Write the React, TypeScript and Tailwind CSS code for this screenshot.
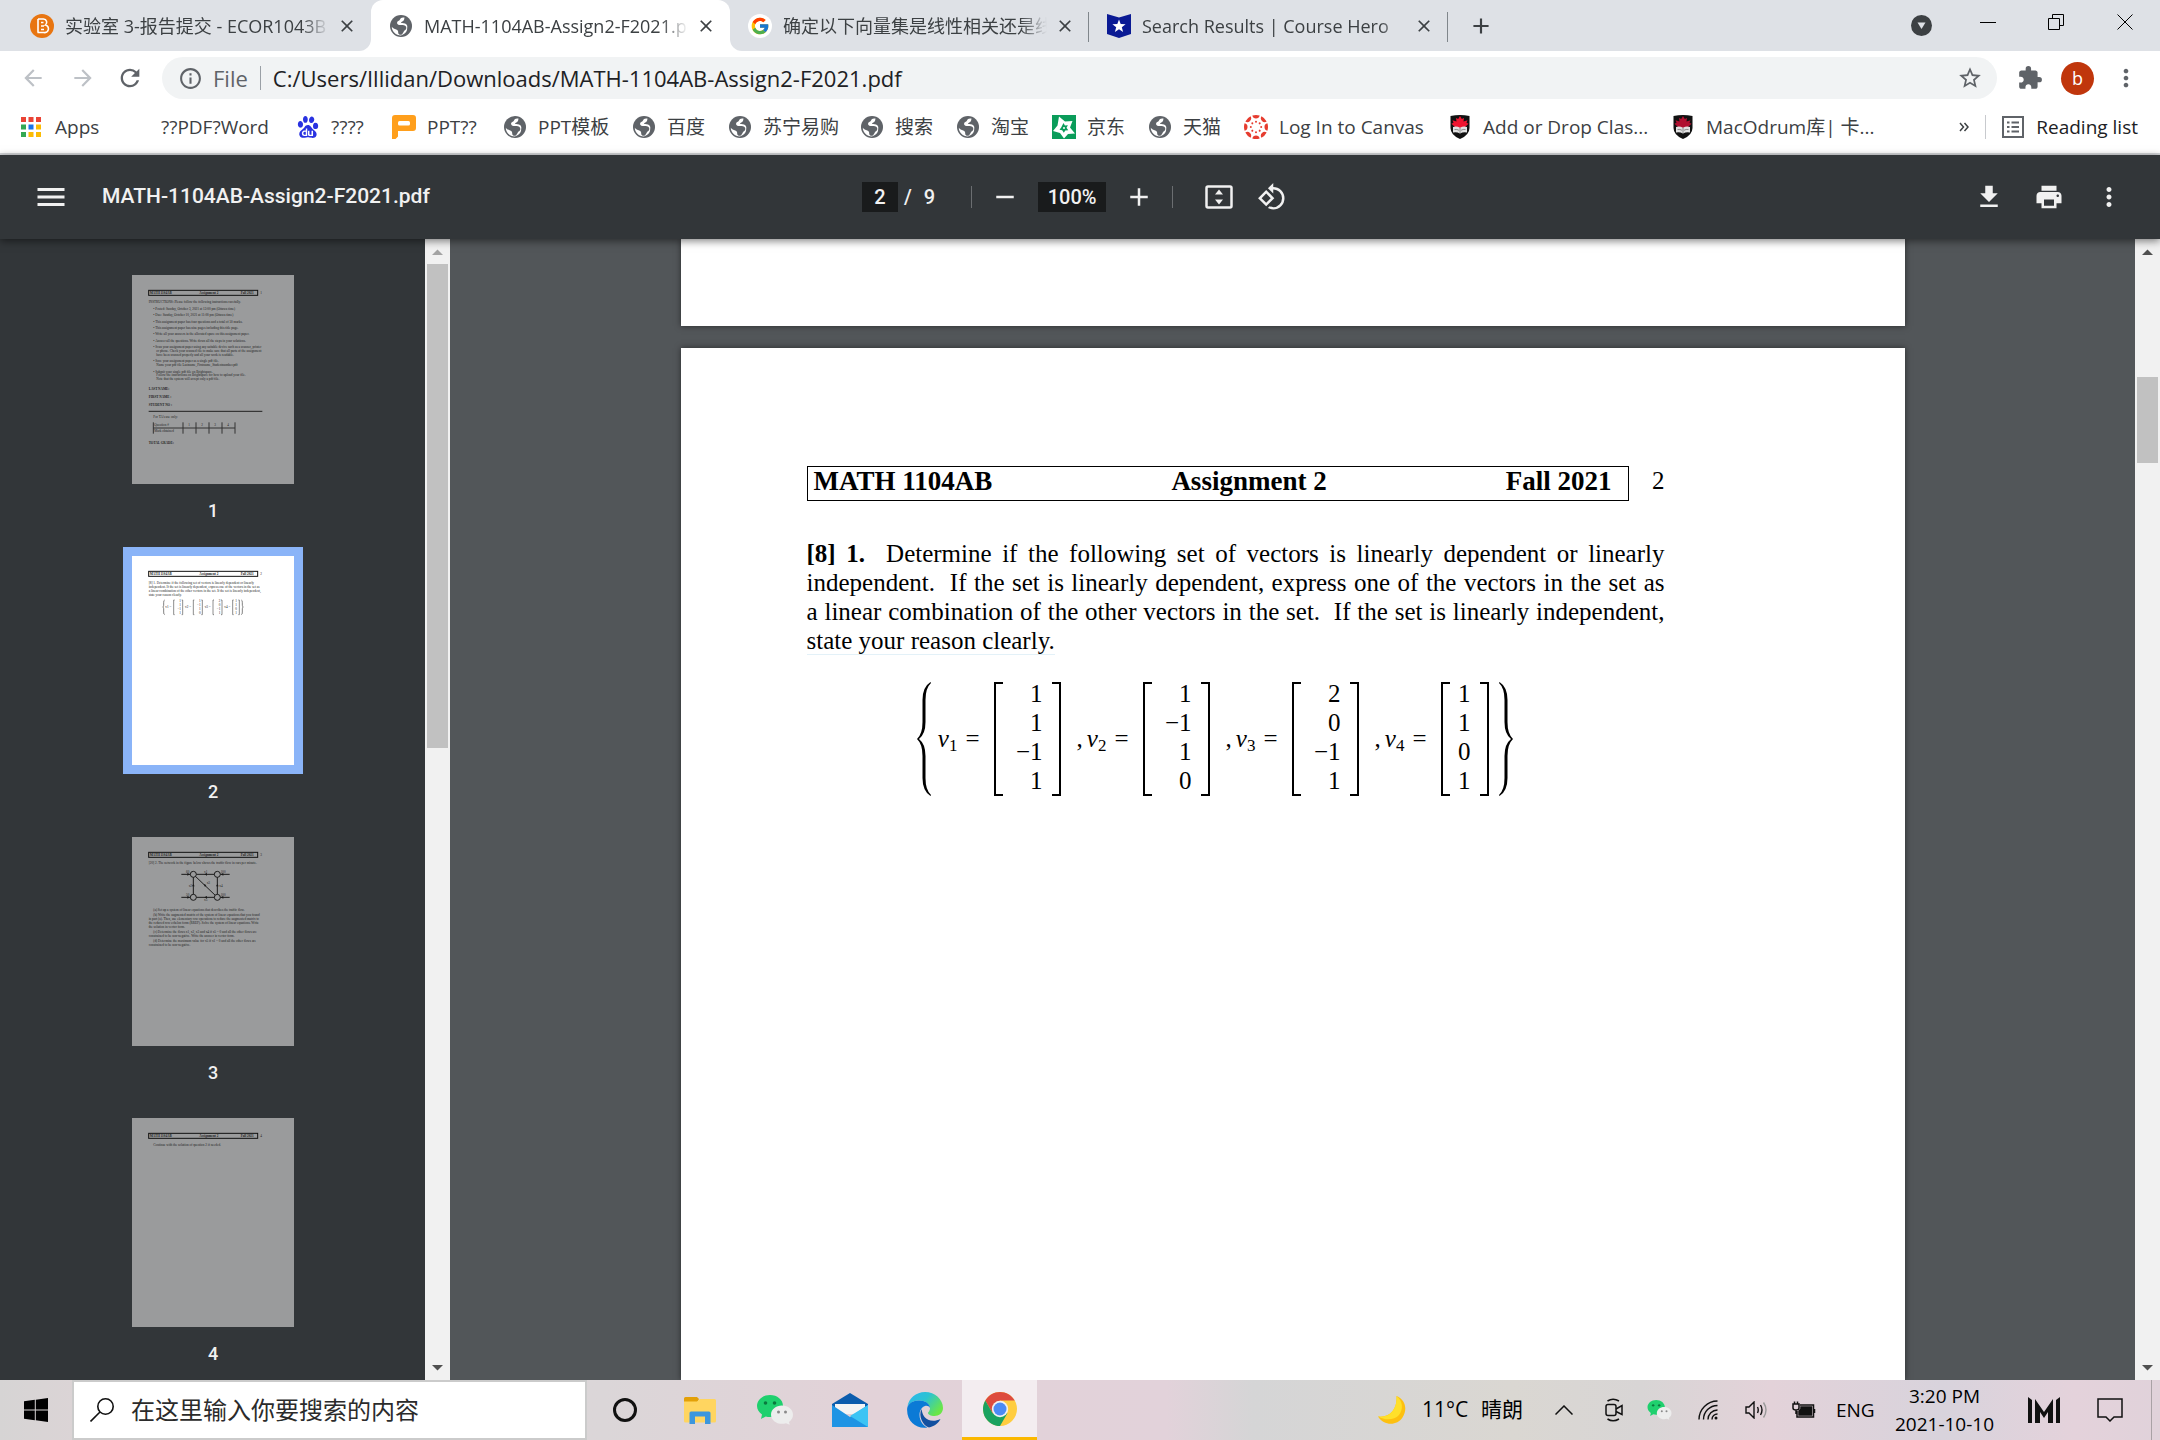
import { useState } from "react";
import type { ReactNode } from "react";
import {
  MdAdd,
  MdArrowBack,
  MdArrowForward,
  MdClose,
  MdExtension,
  MdGetApp,
  MdInfoOutline,
  MdMenu,
  MdMoreVert,
  MdPrint,
  MdRefresh,
  MdRemove,
  MdRotate90DegreesCcw,
  MdStarBorder,
} from "react-icons/md";
import { FcGoogle } from "react-icons/fc";
import { SiBaidu } from "react-icons/si";

/* ---------- site icons ---------- */

const Globe = () => (
  <svg viewBox="0 0 24 24" className="size-6 shrink-0">
    <circle cx="12" cy="12" r="11" fill="#5f6368" />
    <path
      d="M15.500 3.600C13 3 11.500 4 11 5.500c-.3 1.200-2.200 1-2.800 2.500-.6 1.700.6 2.800 2.300 3 2 .2 4.500-.4 6 1 1.300 1.300 1 3.300-.6 4.300-1.400.8-1.400 2.700-3.400 4.500-2.200.2-3-.5-3.300-2 .2-1.600-.4-2.800-2-3.400-1.700-.6-3.300-1-4.400-2.600 0 4.700 4 8.700 9.200 8.700 3.800-1.300 5.500-3.500 6-5.500.2-2.400.9-4.300-.7-5.800-1.500-1.300-3.800-1-5.300-1.200.2-1.700 2.500-1.500 3-3 .3-1 .3-1.600.5-2.400z"
      fill="#fff"
    />
  </svg>
);

const Brightspace = () => (
  <svg viewBox="0 0 24 24" className="size-6 shrink-0">
    <circle cx="12" cy="12" r="12" fill="#e87511" />
    <path
      d="M8 5h5.500a3.400 3.400 0 0 1 2 6 3.800 3.800 0 0 1-1.800 7.500H7.500M8 5v13.500M11 8.500h2.500M11 12h3M11 15.500h3"
      fill="none"
      stroke="#fff"
      strokeWidth="1.600"
    />
  </svg>
);

const CourseHero = () => (
  <svg viewBox="0 0 24 24" className="size-6 shrink-0">
    <path d="M0 0l12 3.500L24 0v20l-12 4-12-4z" fill="#0a1a94" />
    <path d="M12 5.500l1.700 4.600 4.900.2-3.800 3 1.300 4.700-4.100-2.700L7.900 18l1.300-4.700-3.800-3 4.900-.2z" fill="#fff" />
  </svg>
);

const AppsGrid = () => (
  <svg viewBox="0 0 20 20" className="mr-[3px] size-5 shrink-0">
    {["#ea4335", "#ea4335", "#ea4335", "#34a853", "#1a73e8", "#fbbc04", "#34a853", "#fbbc04", "#fbbc04"].map((c, i) => (
      <rect key={i} x={(i % 3) * 7.5} y={Math.floor(i / 3) * 7.5} width="5" height="5" fill={c} />
    ))}
  </svg>
);

const PptIcon = () => (
  <svg viewBox="0 0 24 24" className="size-6 shrink-0">
    <path d="M3 0h18a3 3 0 0 1 3 3v10a3 3 0 0 1-3 3H6v5.500L3.500 24H0V3a3 3 0 0 1 3-3z" fill="#ff9f1c" />
    <rect x="6" y="6" width="12" height="4.500" rx="1.500" fill="#fff" />
  </svg>
);

const JdIcon = () => (
  <svg viewBox="0 0 24 24" className="size-6 shrink-0">
    <rect width="24" height="24" fill="#0a9c5a" />
    <path d="M7 1.500l6 5 7.500-.5-2.500 6.500 5 6-7 .5-4 4.500-4-5.500-7-2 4.500-5.500z" fill="#fff" />
    <path d="M11.500 8l1.400 2.500 3-.3-1.400 2.600 1.800 2.500-3 .2-1.500 2.200-1.600-2.400-2.700-.6 1.700-2.200z" fill="#0a9c5a" />
    <circle cx="12" cy="13" r="1" fill="#fff" />
  </svg>
);

const CanvasIcon = () => (
  <svg viewBox="0 0 24 24" className="size-6 shrink-0">
    {[0, 45, 90, 135, 180, 225, 270, 315].map((a) => (
      <g key={a} transform={`rotate(${a} 12 12)`} fill="#e63c2f">
        <path d="M8.300 .6a12 12 0 0 1 7.400 0 3.800 3.800 0 0 1-7.400 0z" />
        <circle cx="12" cy="6.800" r="1" />
      </g>
    ))}
  </svg>
);

const Shield = ({ leaf }: { leaf: string }) => (
  <svg viewBox="0 0 24 24" className="size-6 shrink-0">
    <path d="M2.500 1Q12-1 21.500 1v12q0 7-9.500 11-9.500-4-9.500-11z" fill="#111" />
    <path d="M12 1l1.800 3 2.200-1-.5 3.500 4-1.200-1 2.500 2 1-4.500 4.200H8l-4.500-4.200 2-1-1-2.500 4 1.200L8 3l2.200 1z" fill={leaf} />
    <path d="M5 12q3.500-1.500 7 .8 3.500-2.300 7-.8v5.500q-3.500-1-7 1-3.500-2-7-1z" fill="#e2e2e2" />
    <path d="M12 12.800v5.700M6.500 14.500q2.500-.5 4.500.8M17.500 14.500q-2.500-.5-4.500.8" stroke="#777" strokeWidth=".8" fill="none" />
  </svg>
);

const WeChat = ({ className }: { className: string }) => (
  <svg viewBox="0 0 36 30" className={className}>
    <path d="M13 0c7.200 0 13 4.700 13 11s-5.800 11-13 11c-1.500 0-2.900-.2-4.200-.6L4 24l1-4.500C2 17.500 0 14.500 0 11 0 4.700 5.800 0 13 0z" fill="#1fd06e" />
    <circle cx="8.500" cy="8" r="1.800" fill="#0a7a3f" />
    <circle cx="17.500" cy="8" r="1.800" fill="#0a7a3f" />
    <path d="M25 10.500c6.100 0 11 4 11 9.200 0 3-1.600 5.500-4 7.200l.7 2.900-3.700-1.600c-1.200.4-2.600.6-4 .6-6.100 0-11-4-11-9.100s4.900-9.200 11-9.200z" fill="#ededed" />
    <circle cx="21.500" cy="17" r="1.500" fill="#8a8a8a" />
    <circle cx="28.500" cy="17" r="1.500" fill="#8a8a8a" />
  </svg>
);

/* ---------- browser chrome ---------- */

type Tab = { title: string; icon: ReactNode };

const tabs: Tab[] = [
  { title: "实验室 3-报告提交 - ECOR1043B", icon: <Brightspace /> },
  { title: "MATH-1104AB-Assign2-F2021.pdf", icon: <Globe /> },
  {
    title: "确定以下向量集是线性相关还是线性",
    icon: (
      <span className="flex size-6 shrink-0 items-center justify-center rounded-full bg-white">
        <FcGoogle className="size-5" />
      </span>
    ),
  },
  { title: "Search Results | Course Hero", icon: <CourseHero /> },
];

function TabStrip() {
  const [active, setActive] = useState(1);

  return (
    <div className="flex h-[51px] shrink-0 bg-[#dee1e6] pl-3 text-[#3c4043]">
      {tabs.map((tab, i) => (
        <div
          key={tab.title}
          className={`relative flex h-[51px] w-[359px] items-center pl-[18px] pr-[14px] ${
            i === active ? "rounded-t-xl bg-white" : ""
          }`}
        >
          {i === active && (
            <>
              <span className="absolute bottom-0 -left-3 size-3 bg-white">
                <span className="block size-3 rounded-br-xl bg-[#dee1e6]" />
              </span>
              <span className="absolute bottom-0 -right-3 size-3 bg-white">
                <span className="block size-3 rounded-bl-xl bg-[#dee1e6]" />
              </span>
            </>
          )}
          <button onClick={() => setActive(i)} className="flex min-w-0 flex-1 items-center gap-[11px] text-left">
            {tab.icon}
            <span className="flex-1 overflow-hidden whitespace-nowrap text-lg [mask-image:linear-gradient(to_right,black_90%,transparent)]">
              {tab.title}
            </span>
          </button>
          <button aria-label="Close tab" className="ml-2 flex size-5 items-center justify-center">
            <MdClose className="size-5" />
          </button>
          {i !== active && i + 1 !== active && <span className="absolute right-0 top-3 h-[30px] w-px bg-[#80868b]" />}
        </div>
      ))}
      <button aria-label="New tab" className="ml-5 flex items-center">
        <MdAdd className="size-[26px]" />
      </button>
      <div className="ml-auto flex text-black">
        <button aria-label="Search tabs" className="flex w-[66px] items-center justify-center">
          <svg viewBox="0 0 21 21" className="size-[21px]">
            <circle cx="10.500" cy="10.500" r="10.500" fill="#3c4043" />
            <path d="M6.500 7.500h8l-4 6.500z" fill="#dee1e6" />
          </svg>
        </button>
        <button aria-label="Minimize" className="flex h-[43px] w-[68px] items-center justify-center">
          <svg viewBox="0 0 16 16" className="size-4" stroke="currentColor">
            <path d="M0 8.500h16" />
          </svg>
        </button>
        <button aria-label="Restore" className="flex h-[43px] w-[68px] items-center justify-center">
          <svg viewBox="0 0 16 16" className="size-4" fill="none" stroke="currentColor">
            <path d="M.5 4.500h11v11H.5zM4.500 4V.5h11v11H12" />
          </svg>
        </button>
        <button aria-label="Close" className="flex h-[43px] w-[70px] items-center justify-center">
          <svg viewBox="0 0 16 16" className="size-4" stroke="currentColor">
            <path d="M.5.5l15 15M15.500.5l-15 15" />
          </svg>
        </button>
      </div>
    </div>
  );
}

function AddressBar() {
  return (
    <div className="flex h-[54px] shrink-0 items-center bg-white pl-5 pr-5 text-[#5f6368]">
      <button aria-label="Back" className="mr-6 text-[#bdc1c6]">
        <MdArrowBack className="size-[26px]" />
      </button>
      <button aria-label="Forward" className="mr-5 text-[#bdc1c6]">
        <MdArrowForward className="size-[26px]" />
      </button>
      <button aria-label="Reload" className="mr-[18px]">
        <MdRefresh className="size-7" />
      </button>
      <div className="flex h-[42px] flex-1 items-center rounded-full bg-[#f1f3f4] pl-4 pr-[14px]">
        <MdInfoOutline className="size-[25px]" />
        <label htmlFor="url" className="ml-[10px] text-[22px]">
          File
        </label>
        <span className="mx-3 h-6 w-px bg-[#9aa0a6]" />
        <input
          id="url"
          defaultValue="C:/Users/Illidan/Downloads/MATH-1104AB-Assign2-F2021.pdf"
          className="min-w-0 flex-1 bg-transparent text-[22px] text-[#202124] outline-none"
        />
        <button aria-label="Bookmark this page">
          <MdStarBorder className="size-[26px]" />
        </button>
      </div>
      <button aria-label="Extensions" className="ml-5">
        <MdExtension className="size-[26px]" />
      </button>
      <button className="ml-[18px] flex size-[33px] items-center justify-center rounded-full bg-[#c0360c] text-lg text-white">b</button>
      <button aria-label="Menu" className="ml-[18px]">
        <MdMoreVert className="size-7" />
      </button>
    </div>
  );
}

const bookmarks = [
  { label: "Apps", icon: <AppsGrid />, width: "w-[105px]" },
  { label: "??PDF?Word", icon: <span className="size-6 shrink-0" />, width: "w-[170px]" },
  { label: "????", icon: <SiBaidu className="mx-px size-[22px] shrink-0 text-[#2932e1]" />, width: "w-24" },
  { label: "PPT??", icon: <PptIcon />, width: "w-[111px]" },
  { label: "PPT模板", icon: <Globe />, width: "w-[129px]" },
  { label: "百度", icon: <Globe />, width: "w-24" },
  { label: "苏宁易购", icon: <Globe />, width: "w-[132px]" },
  { label: "搜索", icon: <Globe />, width: "w-24" },
  { label: "淘宝", icon: <Globe />, width: "w-24" },
  { label: "京东", icon: <JdIcon />, width: "w-24" },
  { label: "天猫", icon: <Globe />, width: "w-24" },
  { label: "Log In to Canvas", icon: <CanvasIcon />, width: "w-[204px]" },
  { label: "Add or Drop Clas...", icon: <Shield leaf="#f0142f" />, width: "w-[223px]" },
  { label: "MacOdrum库| 卡...", icon: <Shield leaf="#b01030" />, width: "w-[223px]" },
];

function BookmarksBar() {
  return (
    <nav className="flex h-[50px] shrink-0 items-center border-b-2 border-[#d5d7da] bg-white pb-1 pl-[21px] pr-[22px] text-[19px] text-[#3c4043]">
      {bookmarks.map((b, i) => (
        <a key={i} href="#" className={`flex shrink-0 items-center gap-[11px] whitespace-nowrap ${b.width}`}>
          {b.icon}
          {b.label}
        </a>
      ))}
      <button aria-label="More bookmarks" className="ml-auto">
        <svg viewBox="0 0 10 10" className="size-[10px]" fill="none" stroke="#3c4043" strokeWidth="1.500">
          <path d="M1 1l3.500 4L1 9M5.500 1L9 5 5.500 9" />
        </svg>
      </button>
      <span className="mx-4 h-6 w-px bg-[#c8cace]" />
      <button className="flex items-center gap-3 text-[#202124]">
        <svg viewBox="0 0 22 22" className="size-[22px]" fill="none" stroke="#5f6368" strokeWidth="2">
          <path d="M1 1h20v20H1zM5 6.500h2.500M9.500 6.500H17M5 11h2.500M9.500 11H17M5 15.500h2.500M9.500 15.500H17" />
        </svg>
        Reading list
      </button>
    </nav>
  );
}

/* ---------- pdf viewer ---------- */

function PdfToolbar() {
  const [page, setPage] = useState("2");
  const [zoom, setZoom] = useState("100%");

  return (
    <header className="relative z-10 flex h-[84px] shrink-0 items-center bg-[#323639] font-[Roboto] text-[#f1f1f1] shadow-[0_2px_8px_rgba(0,0,0,0.5)]">
      <div className="flex flex-1 items-center pl-[33px]">
        <button aria-label="Menu">
          <MdMenu className="size-9" />
        </button>
        <h1 className="ml-[33px] text-[21px] font-medium">MATH-1104AB-Assign2-F2021.pdf</h1>
      </div>
      <div className="flex items-center pr-2 text-xl font-medium">
        <input
          aria-label="Page number"
          value={page}
          onChange={(e) => setPage(e.target.value)}
          className="h-[30px] w-9 bg-[#191b1c] text-center outline-none"
        />
        <span className="ml-[6px]">/</span>
        <span className="ml-3">9</span>
        <span className="ml-9 mr-[18px] h-[22px] w-px bg-[#6b6e71]" />
        <button aria-label="Zoom out">
          <MdRemove className="size-[30px]" />
        </button>
        <input
          aria-label="Zoom level"
          value={zoom}
          onChange={(e) => setZoom(e.target.value)}
          className="ml-[18px] h-[30px] w-[68px] bg-[#191b1c] text-center outline-none"
        />
        <button aria-label="Zoom in" className="ml-[18px]">
          <MdAdd className="size-[30px]" />
        </button>
        <span className="ml-[18px] mr-8 h-[22px] w-px bg-[#6b6e71]" />
        <button aria-label="Fit to page">
          <svg viewBox="0 0 28 24" className="h-6 w-7" fill="none" stroke="currentColor" strokeWidth="2.500">
            <rect x="1.500" y="1.500" width="25" height="21" rx="1.500" />
            <path d="M14 4.500l4 5h-8zM14 19.500l4-5h-8z" fill="currentColor" stroke="none" />
          </svg>
        </button>
        <button aria-label="Rotate" className="ml-6">
          <MdRotate90DegreesCcw className="size-[30px]" />
        </button>
      </div>
      <div className="flex flex-1 items-center justify-end gap-[30px] pr-9">
        <button aria-label="Download">
          <MdGetApp className="size-[30px]" />
        </button>
        <button aria-label="Print">
          <MdPrint className="size-[30px]" />
        </button>
        <button aria-label="More actions">
          <MdMoreVert className="size-[30px]" />
        </button>
      </div>
    </header>
  );
}

function ScrollBar({ thumb, upColor }: { thumb: string; upColor: string }) {
  return (
    <div className="flex w-[25px] shrink-0 flex-col items-center bg-[#f1f1f1]">
      <svg viewBox="0 0 25 25" className="size-[25px] shrink-0">
        <path d="M7 16l5.500-5.500L18 16z" fill={upColor} />
      </svg>
      <div className={`w-[21px] bg-[#c1c1c1] ${thumb}`} />
      <svg viewBox="0 0 25 25" className="mt-auto size-[25px] shrink-0">
        <path d="M7 10l5.500 5.500L18 10z" fill="#505050" />
      </svg>
    </div>
  );
}

type Line = { x: number; y: number; text: string; bold?: boolean };

// Miniature pages are drawn on a 486 x 627 grid
function MiniPage({ no, lines, children }: { no: number; lines: Line[]; children?: ReactNode }) {
  return (
    <svg viewBox="0 0 486 627" className="h-[209px] w-[162px]" fontFamily="Liberation Serif, serif" fontSize="10" fill="#222">
      <rect x="50" y="46" width="327" height="15" fill="none" stroke="#111" strokeWidth="3" />
      <g fontWeight="bold">
        <text x="53" y="57">MATH 1104AB</text>
        <text x="202" y="57">Assignment 2</text>
        <text x="326" y="57">Fall 2021</text>
      </g>
      <text x="385" y="57">{no}</text>
      {lines.map((l, i) => (
        <text key={i} x={l.x} y={l.y} fontWeight={l.bold ? "bold" : "normal"}>
          {l.text}
        </text>
      ))}
      {children}
    </svg>
  );
}

const page1: Line[] = [
  { x: 50, y: 84, text: "INSTRUCTIONS: Please follow the following instructions carefully." },
  { x: 64, y: 105, text: "• Posted: Sunday, October 3, 2021 at 12:00 pm (Ottawa time)" },
  { x: 64, y: 124, text: "• Due: Sunday, October 10, 2021 at 11:00 pm (Ottawa time)" },
  { x: 64, y: 144, text: "• This assignment paper has four questions and a total of 50 marks." },
  { x: 64, y: 162, text: "• This assignment paper has nine pages including this title page." },
  { x: 64, y: 181, text: "• Write all your answers in the allocated space on this assignment paper." },
  { x: 64, y: 201, text: "• Answer all the questions. Write down all the steps in your solutions." },
  { x: 64, y: 220, text: "• Scan your assignment paper using any suitable device such as a scanner, printer" },
  { x: 73, y: 232, text: "or phone. Check your scanned file to make sure that all parts of the assignment" },
  { x: 73, y: 244, text: "have been scanned properly and all your work is readable." },
  { x: 64, y: 262, text: "• Save your assignment paper as a single pdf file." },
  { x: 73, y: 274, text: "Name your pdf file Lastname_Firstname_Studentnumber.pdf" },
  { x: 64, y: 294, text: "• Submit your single pdf file on Brightspace." },
  { x: 73, y: 304, text: "Follow the instructions on Brightspace for how to upload your file." },
  { x: 73, y: 315, text: "Note that the system will accept only a pdf file." },
  { x: 50, y: 345, text: "LAST NAME:", bold: true },
  { x: 50, y: 369, text: "FIRST NAME :", bold: true },
  { x: 50, y: 393, text: "STUDENT NO :", bold: true },
  { x: 64, y: 429, text: "For TA's use only:" },
  { x: 67, y: 453, text: "Question #" },
  { x: 169, y: 453, text: "1" },
  { x: 208, y: 453, text: "2" },
  { x: 247, y: 453, text: "3" },
  { x: 286, y: 453, text: "4" },
  { x: 67, y: 471, text: "Mark obtained" },
  { x: 50, y: 507, text: "TOTAL GRADE:", bold: true },
];

const page2: Line[] = [
  { x: 50, y: 84, text: "[8] 1. Determine if the following set of vectors is linearly dependent or linearly" },
  { x: 50, y: 96, text: "independent. If the set is linearly dependent, express one of the vectors in the set as" },
  { x: 50, y: 108, text: "a linear combination of the other vectors in the set. If the set is linearly independent," },
  { x: 50, y: 120, text: "state your reason clearly." },
];

const page3: Line[] = [
  { x: 50, y: 82, text: "[20]  2. The network in the figure below shows the traffic flow in cars per minute." },
  { x: 64, y: 222, text: "(a) Set up a system of linear equations that describes the traffic flow." },
  { x: 64, y: 237, text: "(b) Write the augmented matrix of the system of linear equations that you found" },
  { x: 50, y: 249, text: "in part (a). Then, use elementary row operations to reduce the augmented matrix to" },
  { x: 50, y: 261, text: "the reduced row echelon form (RREF). Solve the system of linear equations. Write" },
  { x: 50, y: 273, text: "the solution in vector form." },
  { x: 64, y: 288, text: "(c) Determine the flows x1, x2, x3 and x4 if x5 = 0 and all the other flows are" },
  { x: 50, y: 300, text: "constrained to be non-negative. Write the answer in vector form." },
  { x: 64, y: 316, text: "(d) Determine the maximum value for x5 if x1 = 0 and all the other flows are" },
  { x: 50, y: 328, text: "constrained to be non-negative." },
];

const page4: Line[] = [{ x: 64, y: 85, text: "Continue with the solution of question 2 if needed." }];

const vectors = [
  ["1", "1", "−1", "1"],
  ["1", "−1", "1", "0"],
  ["2", "0", "−1", "1"],
  ["1", "1", "0", "1"],
];

const miniatures = [
  <MiniPage no={1} lines={page1}>
    <path d="M50 409h341" stroke="#222" strokeWidth="3" />
    <path d="M64 459h245M64 442v34M153 442v34M192 442v34M231 442v34M270 442v34M309 442v34" stroke="#333" strokeWidth="3" />
  </MiniPage>,
  <MiniPage no={2} lines={page2}>
    <path d="M98 132q-3 0-3 8v8l-2 5 2 5v10q0 8 3 8M328 132q3 0 3 8v8l2 5-2 5v10q0 8-3 8" stroke="#444" strokeWidth="2" fill="none" />
    {vectors.map((v, i) => (
      <g key={i}>
        <text x={100 + i * 59} y="157">{`v${i + 1} =`}</text>
        <path
          d={
            i === 3
              ? `M${128 + i * 59} 132h-3v44h3M${142 + i * 59} 132h3v44h-3`
              : `M${128 + i * 59} 132h-3v44h3M${149 + i * 59} 132h3v44h-3`
          }
          fill="none"
          stroke="#555"
          strokeWidth="2"
        />
        {v.map((n, j) => (
          <text key={j} x={(i === 3 ? 138 : 147) + i * 59} y={139 + j * 12} textAnchor="end">
            {n}
          </text>
        ))}
      </g>
    ))}
  </MiniPage>,
  <MiniPage no={3} lines={page3}>
    <path d="M148 112h145M148 181h145M184 112v69M256 112v69M184 112l72 69" stroke="#1a1a1a" strokeWidth="3" />
    {[[184, 112], [256, 112], [184, 181], [256, 181]].map(([x, y]) => (
      <circle key={`${x}-${y}`} cx={x} cy={y} r="9" fill="#9a9b9c" stroke="#1a1a1a" strokeWidth="3" />
    ))}
    <path d="M174 112l-8-4v8zM174 181l-8-4v8zM266 112l8-4v8zM266 181l8-4v8zM217 112l8-4v8zM217 181l8-4v8zM184 141l-4 7h8zM256 141l-4 7h8zM215 141l8 3-4 6z" fill="#1a1a1a" />
    <text x="162" y="107">60</text>
    <text x="216" y="107">x1</text>
    <text x="266" y="107">100</text>
    <text x="170" y="149">x2</text>
    <text x="224" y="142">x3</text>
    <text x="262" y="149">x4</text>
    <text x="162" y="177">50</text>
    <text x="216" y="191">x5</text>
    <text x="266" y="177">100</text>
  </MiniPage>,
  <MiniPage no={4} lines={page4} />,
];

function Thumbnails() {
  const [selected, setSelected] = useState(1);

  return (
    <aside className="flex min-w-0 flex-1 flex-col items-center overflow-hidden bg-[#323639] pt-[27px] pl-px">
      {miniatures.map((mini, i) => (
        <button
          key={i}
          onClick={() => setSelected(i)}
          className="flex h-[281px] shrink-0 flex-col items-center font-[Roboto] text-lg font-medium text-[#f1f1f1]"
        >
          <span
            className={`box-content block border-[9px] ${
              i === selected ? "border-[#8ab4f8] bg-white" : "border-transparent bg-[#9a9b9c] bg-clip-padding"
            }`}
          >
            {mini}
          </span>
          <span className="mt-1">{i + 1}</span>
        </button>
      ))}
    </aside>
  );
}

function Bracket({ right }: { right?: boolean }) {
  return (
    <span className={`h-[114px] w-[9px] border-y-2 border-black ${right ? "border-r-2" : "border-l-2"}`} />
  );
}

function Brace({ right }: { right?: boolean }) {
  return (
    <svg viewBox="0 0 14 114" className={`h-[114px] w-[14px] ${right ? "-scale-x-100" : ""}`}>
      <path
        d="M13.500 0Q5.500 5 5.500 18v22q0 12-5.500 17 5.500 5 5.500 17v22q0 13 8 18l.5-1Q8.500 108 8.500 96V74q0-12-6.500-17 6.500-5 6.500-17V18q0-12 5.500-17z"
        fill="#000"
      />
    </svg>
  );
}

function VectorSet() {
  return (
    <div className="ml-[110px] mt-6 flex items-center">
      <Brace />
      {vectors.map((column, i) => (
        <div key={i} className="flex items-center">
          <span className={`flex items-baseline justify-end pr-[14px] ${i === 0 ? "w-[63px]" : "w-[82px]"}`}>
            {i > 0 && <span className="mr-1">,</span>}
            <i>v</i>
            <sub className="bottom-0 mt-2 translate-y-1 text-[17px]">{i + 1}</sub>
            <span className="ml-2">=</span>
          </span>
          <Bracket />
          <span className={`flex flex-col pb-[3px] text-right ${i === 3 ? "w-[30px] pr-[9px]" : "w-[49px] pr-[9px]"}`}>
            {column.map((n, j) => (
              <span key={j}>{n}</span>
            ))}
          </span>
          <Bracket right />
        </div>
      ))}
      <span className="ml-[10px] flex">
        <Brace right />
      </span>
    </div>
  );
}

function Document() {
  return (
    <main className="flex min-w-0 flex-1 flex-col items-center gap-[22px] overflow-hidden bg-[#525659]">
      <div className="h-[87px] w-[1224px] shrink-0 bg-white shadow-[0_0_6px_rgba(0,0,0,0.5)]" />
      <article className="w-[1224px] grow bg-white pl-[126px] pr-[240px] pt-[118px] font-['Liberation_Serif',serif] text-[25px] leading-[29px] text-black shadow-[0_0_6px_rgba(0,0,0,0.5)]">
        <div className="flex justify-between">
          <div className="flex h-[35px] w-[822px] justify-between border border-black pl-[6px] pr-4 text-[27px] font-bold">
            <span>MATH 1104AB</span>
            <span>Assignment 2</span>
            <span>Fall 2021</span>
          </div>
          <span>2</span>
        </div>
        <div className="mt-[38px] whitespace-nowrap">
          <p className="[text-align-last:justify]">
            <b>[8] 1.</b>&nbsp; Determine if the following set of vectors is linearly dependent or linearly
          </p>
          <p className="[text-align-last:justify]">
            independent.&nbsp; If the set is linearly dependent, express one of the vectors in the set as
          </p>
          <p className="[text-align-last:justify]">
            a linear combination of the other vectors in the set.&nbsp; If the set is linearly independent,
          </p>
          <p>
            <span className="border-b border-[#e3f1f8]">state your reason clearly.</span>
          </p>
        </div>
        <VectorSet />
      </article>
    </main>
  );
}

/* ---------- taskbar ---------- */

const pinned = [
  {
    name: "Cortana",
    icon: (
      <svg viewBox="0 0 24 24" className="size-6">
        <circle cx="12" cy="12" r="10.500" fill="none" stroke="#111" strokeWidth="3" />
      </svg>
    ),
  },
  {
    name: "File Explorer",
    icon: (
      <svg viewBox="0 0 32 27" className="h-[27px] w-8">
        <path d="M0 1.500Q0 0 1.500 0H13l2 2-1.500 3H0z" fill="#e3a008" />
        <path d="M0 4.500h13L16 2h14.500Q32 2 32 3.500V24q0 1.500-1.500 1.500h-29Q0 25.500 0 24z" fill="#ffd560" />
        <path d="M5.500 27V16q0-1.500 1.500-1.500h18q1.500 0 1.500 1.500v11H21v-7.500H11V27z" fill="#3c96dd" />
      </svg>
    ),
  },
  { name: "WeChat", icon: <WeChat className="h-[30px] w-9" /> },
  {
    name: "Mail",
    icon: (
      <svg viewBox="0 0 36 34" className="h-[34px] w-9">
        <path d="M0 11L18 0l18 11v4H0z" fill="#0b5cad" />
        <path d="M3 11h30v10H3z" fill="#f4f4f4" />
        <path d="M0 12l18 12L36 12v22H0z" fill="#1e94e4" />
        <path d="M36 12L18 23l18 11z" fill="#3cc4f4" />
      </svg>
    ),
  },
  {
    name: "Edge",
    icon: (
      <svg viewBox="0 0 36 36" className="size-9">
        <defs>
          <linearGradient id="edgeTop" x1="0" y1="0" x2="1" y2="0.600">
            <stop offset="0" stopColor="#2bb5f0" />
            <stop offset="0.500" stopColor="#2cc3d2" />
            <stop offset="1" stopColor="#6ae648" />
          </linearGradient>
        </defs>
        <path d="M18 0c10 0 18 7.500 18 16 0 5-4 8-8.500 8-4 0-6.500-1.500-6.500-3 0-1 2-1.500 2-5 0-4-5-7.500-11-7.500C6 8.500 1 12 .3 15 1.500 6.500 9 0 18 0z" fill="url(#edgeTop)" />
        <path d="M.2 16C1 11.500 6 8.500 12 8.500c6 0 11 3 11 7.500-1-2-3-2.500-5-2-3.500 1-5.500 5-5.500 9 0 6 4 11 8 12.500C10 37.500-1 30 .2 16z" fill="#0b7ad6" />
        <path d="M14.500 17C11 24 16 34 22 35.500c5-1 9.500-4.500 11.500-8.500-6 3-13 2-16-2-2-2.500-2.500-5.500-3-8z" fill="#1250a0" />
      </svg>
    ),
  },
  {
    name: "Chrome",
    icon: (
      <svg viewBox="0 0 34 34" className="size-[34px]">
        <circle cx="17" cy="17" r="17" fill="#ffcd40" />
        <path d="M17 8.500h14.700A17 17 0 0 0 2.300 8.500l7.300 12.800z" fill="#dd4b3e" />
        <path d="M2.300 8.500A17 17 0 0 0 17 34l7.400-12.700H9.600z" fill="#1aa260" />
        <circle cx="17" cy="17" r="8.200" fill="#f1f1f1" />
        <circle cx="17" cy="17" r="6.500" fill="#4c8bf5" />
      </svg>
    ),
  },
];

function Taskbar() {
  return (
    <footer className="flex h-[60px] shrink-0 items-center bg-[linear-gradient(90deg,#d6d4d4_0%,#dcd4d6_4%,#dbd6d8_28%,#e2d2d8_40%,#e2d2da_54%,#d5d5d6_58%,#dad7d2_70%,#d8d5d5_76%,#e3d2d9_82%,#d8d3dc_90%,#e4d2db_96%,#e0d2da_100%)] text-black">
      <button aria-label="Start" className="flex w-[72px] justify-center">
        <svg viewBox="0 0 24 24" className="size-6">
          <path d="M0 3.300l10.800-1.500v9.700H0zM11.800 1.700L24 0v11.500H11.800zM0 12.500h10.800v9.700L0 20.700zM11.800 12.500H24V24l-12.200-1.700z" />
        </svg>
      </button>
      <label htmlFor="search" className="flex h-[60px] w-[515px] items-center border-2 border-[#cbcbcb] bg-white pl-4">
        <svg viewBox="0 0 24 24" className="size-6" fill="none" stroke="#111" strokeWidth="1.600">
          <circle cx="15.500" cy="8.500" r="7.700" />
          <path d="M10 14L.5 23.500" />
        </svg>
        <input
          id="search"
          placeholder="在这里输入你要搜索的内容"
          className="ml-[17px] min-w-0 flex-1 bg-transparent text-2xl text-black outline-none placeholder:text-[#2b2b2b]"
        />
      </label>
      {pinned.map((app) => (
        <button
          key={app.name}
          aria-label={app.name}
          className={`flex h-[60px] w-[75px] items-center justify-center ${
            app.name === "Chrome" ? "border-b-[3px] border-[#fbb800] bg-[#f3edf0]" : ""
          }`}
        >
          {app.icon}
        </button>
      ))}
      <div className="ml-auto flex h-full items-center text-xl">
        <svg viewBox="0 0 28 28" className="size-7">
          <path d="M18.500 0C28 4 29.500 14 24.500 21.500 19 30 6 30 0 20.500 12 22 19.500 13 18.500 0z" fill="#fdc010" />
          <path d="M18.500 0C25 5 25.500 13 21 19 16 24.500 7 24.500 0 20.500 12 22 19.500 13 18.500 0z" fill="#ffe02a" />
        </svg>
        <span className="ml-4 w-[59px] text-[21px]">11°C</span>
        <span className="w-[74px] text-[21px]">晴朗</span>
        <svg viewBox="0 0 18 10" className="h-[10px] w-[18px]" fill="none" stroke="#111" strokeWidth="1.500">
          <path d="M.5 9.500L9 1l8.500 8.500" />
        </svg>
        <svg viewBox="0 0 18 24" className="ml-8 h-6 w-[18px]" fill="none" stroke="#111" strokeWidth="1.500">
          <rect x="1" y="6.500" width="10" height="11" rx="2" />
          <path d="M11 11l6-3.500v9L11 13.500M2.500 3Q8-.5 14 3M2.500 21Q8 24.500 14 21" />
        </svg>
        <WeChat className="ml-6 h-5 w-[25px]" />
        <svg viewBox="0 0 20 20" className="ml-[26px] size-5" fill="none" stroke="#111" strokeWidth="1.400">
          <path d="M1 19.500A18.500 18.500 0 0 1 19.500 1M5.500 19.500a14 14 0 0 1 14-14M10 19.500a9.500 9.500 0 0 1 9.500-9.500M14 19.500a5.500 5.500 0 0 1 5.500-5.500" />
          <circle cx="18" cy="18" r="1.500" fill="#111" stroke="none" />
        </svg>
        <svg viewBox="0 0 22 18" className="ml-[27px] h-[18px] w-[22px]" fill="none" stroke="#111" strokeWidth="1.400">
          <path d="M1 6h3l5-5v16l-5-5H1zM12.500 6q1.500 3 0 6M15.500 4q3 5 0 10" />
          <path d="M18.500 1.500q5 7.500 0 15" stroke="#999" />
        </svg>
        <svg viewBox="0 0 24 18" className="ml-[25px] h-[18px] w-6" fill="none" stroke="#111" strokeWidth="1.500">
          <path d="M8 4h13.500v12H5v-6M22.500 8v4M1 3h6v4q0 2-3 2t-3-2zM2.500 3V.5M5.500 3V.5M4 9v4" />
          <path d="M9 6h10.500v8H7v-4l2-2z" fill="#111" />
        </svg>
        <span className="ml-5 w-[56px] text-[19px]">ENG</span>
        <div className="flex w-[105px] flex-col items-center whitespace-nowrap text-[19px] leading-7">
          <span>3:20 PM</span>
          <span>2021-10-10</span>
        </div>
        <svg viewBox="0 0 32 26" className="ml-[31px] h-[26px] w-8" fill="#111">
          <path d="M0 0l4 3v23H0zM32 0l-4 3v23h4zM7 2l9 13 9-13v24h-5V15l-4 6-4-6v11H7z" />
        </svg>
        <svg viewBox="0 0 26 24" className="ml-[37px] h-6 w-[26px]" fill="none" stroke="#111" strokeWidth="1.500">
          <path d="M1 1h24v18h-8l-4 4-4-4H1z" />
        </svg>
        <span className="ml-7 mr-2 h-full w-px bg-[#a9a2a6]" />
      </div>
    </footer>
  );
}

export default function App() {
  return (
    <div className="flex h-screen flex-col overflow-hidden font-['Open_Sans','Noto_Sans_CJK_SC',sans-serif]">
      <TabStrip />
      <AddressBar />
      <BookmarksBar />
      <PdfToolbar />
      <div className="flex min-h-0 flex-1">
        <div className="flex w-[450px] shrink-0">
          <Thumbnails />
          <ScrollBar thumb="h-[484px]" upColor="#a3a3a3" />
        </div>
        <Document />
        <ScrollBar thumb="mt-[113px] h-[86px]" upColor="#505050" />
      </div>
      <Taskbar />
    </div>
  );
}
